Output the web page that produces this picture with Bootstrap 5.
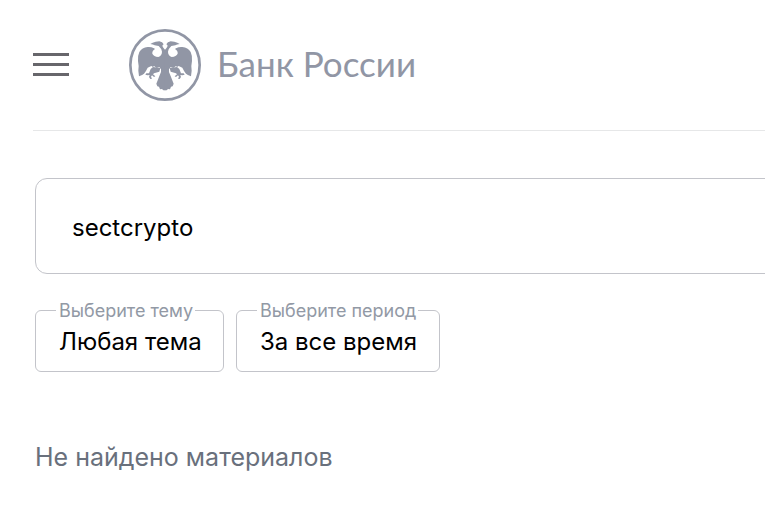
<!DOCTYPE html>
<html lang="ru">
<head>
<meta charset="utf-8">
<meta name="viewport" content="width=device-width, initial-scale=1">
<title>Поиск | Банк России</title>
<link href="https://cdn.jsdelivr.net/npm/bootstrap@5.3.0/dist/css/bootstrap.min.css" rel="stylesheet">
<style>
body { font-family: Inter, "Noto Sans", sans-serif; color: #000; background: #fff; overflow-x: hidden; }
.page { padding-left: 33px; }
.site-header { height: 131px; border-bottom: 1px solid #e6e7e8; column-gap: 60px; }
.menu-btn { width: 36px; line-height: 0; }
.brand { color: #9196a5; column-gap: 16px; }
.brand:hover { color: #9196a5; }
.brand-name { font: 35px/48px Lato, sans-serif; padding-bottom: 4px; }
.search-area { padding: 47px 0 0 2px; margin-right: -16px; }
.search-box { height: 96px; padding: 2px 36px 0; border: 1px solid #c3c4ca; border-radius: 12px; font-size: 24px; color: #000; }
.filters { margin-top: 24px; column-gap: 12px; padding-left: 2px; }
.filter { height: 74px; border: 1px solid #c3c4ca; border-radius: 6px; padding: 0 20px; }
.filter legend { font-size: 18px; line-height: 25px; padding: 0 2px 0 3px; margin-right: -4px; color: #9299a5; }
.filter select { appearance: none; font-size: 24px; line-height: 38px; padding: 0 0 0 3px; color: #000; }
.theme-filter { width: 189px; }
.period-filter { width: 204px; }
.result { font-size: 25px; line-height: 32px; color: #69707c; margin-top: 69px; padding-left: 2px; }
</style>
<script defer src="https://cdn.jsdelivr.net/npm/bootstrap@5.3.0/dist/js/bootstrap.bundle.min.js"></script>
</head>
<body>
<div class="page">
  <header class="site-header d-flex align-items-center">
    <button class="menu-btn border-0 bg-transparent p-0" type="button" aria-label="Меню">
      <svg width="36" height="24" viewBox="0 0 36 24" fill="#67666b" aria-hidden="true"><path d="M0 0h36v3H0zM0 10h36v3H0zM0 20h36v3H0z"/></svg>
    </button>
    <a class="brand d-flex align-items-center text-decoration-none" href="#">
      <svg width="72" height="72" viewBox="0 0 216 216" aria-hidden="true">
        <circle cx="108" cy="108" r="104" fill="none" stroke="currentColor" stroke-width="8"/>
        <g fill="currentColor">
          <g id="eagle-half">
            <path d="M109 64L103 56Q97 50 104 46Q101 38 91 37L80 38Q70 40 64 45Q73 46 77 49L89 51Q98 59 99 68Q99 80 88 84Q74 83 70 74Q69 65 78 60L75 58Q66 53 56 54Q39 56 31 69Q26 79 27 96L29 111L28 125L30 142Q41 138 45 134Q51 127 56 116L67 111L72 114L75 111L83 117L91 114L96 121Q98 129 92 139L82 164L85 172L90 173L93 181L99 180L103 184L109 184Z"/>
            <path d="M72 114L65 120L60 133L52 133L49 137L56 139L62 138L60 144L64 150L69 149L66 143L69 139L75 144L79 142L72 136L75 133L91 128L94 117Z"/>
          </g>
          <use href="#eagle-half" transform="translate(216 0) scale(-1 1)"/>
        </g>
      </svg>
      <span class="brand-name">Банк России</span>
    </a>
  </header>
  <main>
    <form>
      <div class="search-area">
        <input class="search-box d-block w-100" type="text" value="sectcrypto" aria-label="Поиск">
      </div>
      <div class="filters d-flex">
        <fieldset class="filter theme-filter">
          <legend class="float-none w-auto mb-0 text-nowrap"><label for="theme">Выберите тему</label></legend>
          <select id="theme" class="d-block w-100 border-0 bg-transparent"><option>Любая тема</option></select>
        </fieldset>
        <fieldset class="filter period-filter">
          <legend class="float-none w-auto mb-0 text-nowrap"><label for="period">Выберите период</label></legend>
          <select id="period" class="d-block w-100 border-0 bg-transparent"><option>За все время</option></select>
        </fieldset>
      </div>
    </form>
    <p class="result mb-0">Не найдено материалов</p>
  </main>
</div>
</body>
</html>
